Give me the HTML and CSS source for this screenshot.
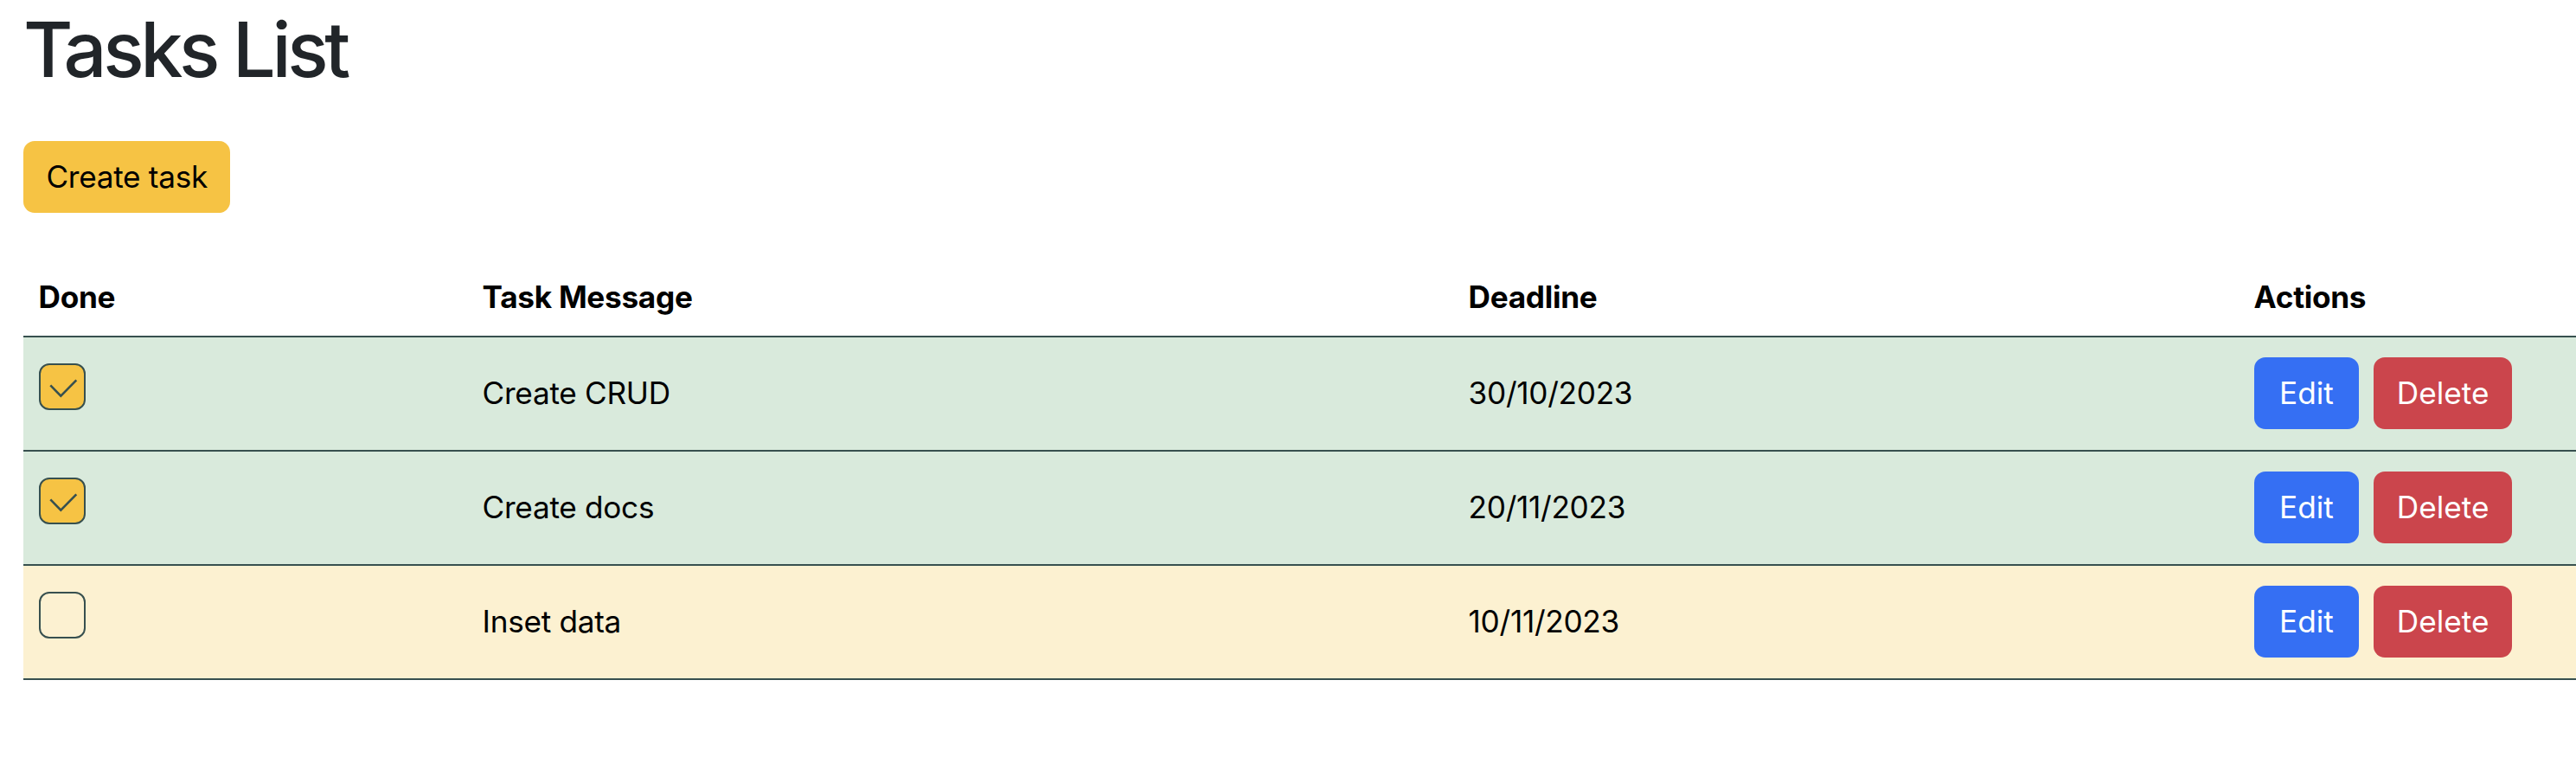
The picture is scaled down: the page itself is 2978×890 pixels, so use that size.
FILE: index.html
```html
<!DOCTYPE html>
<html lang="en">
<head>
<meta charset="utf-8">
<title>Tasks List</title>
<link rel="stylesheet" href="styles.css">
</head>
<body>
<main class="page">
  <h1 class="title">Tasks List</h1>
  <button class="btn btn-warning" type="button">Create task</button>
  <table class="tasks">
    <colgroup>
      <col class="col-done">
      <col class="col-msg">
      <col class="col-date">
      <col class="col-actions">
    </colgroup>
    <thead>
      <tr>
        <th>Done</th>
        <th>Task Message</th>
        <th>Deadline</th>
        <th>Actions</th>
      </tr>
    </thead>
    <tbody>
      <tr class="row-done">
        <td class="cell-check">
          <span class="check is-checked">
            <svg viewBox="0 0 54 54" width="54" height="54" aria-hidden="true"><polyline points="14.3,26.3 26.3,38.7 44.3,20.3" fill="none" stroke="#37504f" stroke-width="2.6"/></svg>
          </span>
        </td>
        <td>Create CRUD</td>
        <td>30/10/2023</td>
        <td class="cell-actions"><button class="btn btn-primary" type="button">Edit</button><button class="btn btn-danger" type="button">Delete</button></td>
      </tr>
      <tr class="row-done">
        <td class="cell-check">
          <span class="check is-checked">
            <svg viewBox="0 0 54 54" width="54" height="54" aria-hidden="true"><polyline points="14.3,26.3 26.3,38.7 44.3,20.3" fill="none" stroke="#37504f" stroke-width="2.6"/></svg>
          </span>
        </td>
        <td>Create docs</td>
        <td>20/11/2023</td>
        <td class="cell-actions"><button class="btn btn-primary" type="button">Edit</button><button class="btn btn-danger" type="button">Delete</button></td>
      </tr>
      <tr class="row-pending">
        <td class="cell-check">
          <span class="check"></span>
        </td>
        <td>Inset data</td>
        <td>10/11/2023</td>
        <td class="cell-actions"><button class="btn btn-primary" type="button">Edit</button><button class="btn btn-danger" type="button">Delete</button></td>
      </tr>
    </tbody>
  </table>
</main>
</body>
</html>
```
FILE: styles.css
```css
* { box-sizing: border-box; }

html, body {
  margin: 0;
  background: #ffffff;
}

body {
  font-family: Inter, "Noto Sans", "Liberation Sans", sans-serif;
  font-size: 35.2px;
  line-height: 1.5;
  color: #000000;
}

.page {
  padding: 5px 0 0 27px;
}

.title {
  margin: 0 0 52px 0;
  font-size: 88px;
  font-weight: 500;
  line-height: 1.2;
  color: #212529;
  letter-spacing: -4.4px;
}

.btn {
  display: inline-flex;
  align-items: center;
  justify-content: center;
  height: 83px;
  padding: 0 26.4px;
  border: 0;
  border-radius: 13px;
  font-family: inherit;
  font-size: 35.2px;
  line-height: 1.5;
  letter-spacing: -0.3px;
  cursor: pointer;
}

.btn-warning {
  background: #f6c344;
  color: #000000;
}

.btn-primary {
  background: #356ff3;
  color: #ffffff;
}

.btn-danger {
  background: #cb454c;
  color: #ffffff;
}

.tasks {
  width: 100%;
  margin-top: 54px;
  border-collapse: collapse;
  table-layout: fixed;
}

.col-done { width: 513px; }
.col-msg { width: 1140px; }
.col-date { width: 908px; }
.col-actions { width: auto; }

.tasks th {
  text-align: left;
  font-weight: 700;
  padding: 17.6px;
  line-height: 1.5;
  letter-spacing: -0.3px;
  border-bottom: 2px solid #37504f;
}

.tasks td {
  padding: 23.5px 17.6px;
  vertical-align: middle;
  letter-spacing: -0.3px;
  border-bottom: 2px solid #37504f;
}

.row-done td { background: #d9eadc; }
.row-pending td { background: #fcf1d1; }

.tasks td.cell-check {
  vertical-align: top;
  padding-top: 30px;
}

.check {
  display: block;
  width: 54px;
  height: 54px;
  border: 2.6px solid #37504f;
  border-radius: 12px;
  position: relative;
  background: transparent;
}

.check svg {
  position: absolute;
  left: -2.6px;
  top: -2.6px;
}

.check.is-checked {
  background: #f6c344;
}

.cell-actions {
  white-space: nowrap;
}

.cell-actions .btn {
  padding: 0 26.5px;
  letter-spacing: 0;
}

.cell-actions .btn-primary {
  padding: 0 29.5px;
}

.cell-actions .btn + .btn {
  margin-left: 17px;
}
```
